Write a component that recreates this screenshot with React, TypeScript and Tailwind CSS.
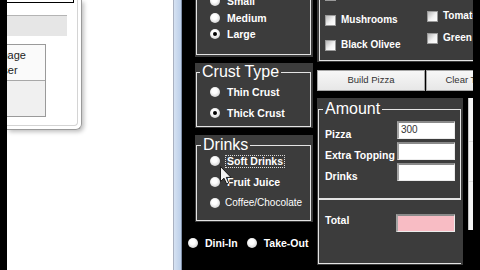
import React from "react";

function Radio({ checked }: { checked?: boolean }) {
  return (
    <span className="flex h-[10px] w-[10px] shrink-0 items-center justify-center rounded-full bg-[radial-gradient(circle_at_45%_40%,#ffffff_30%,#bdbdbd)]">
      {checked && <span className="h-[4px] w-[4px] rounded-full bg-black" />}
    </span>
  );
}

function Check() {
  return (
    <span className="h-[11px] w-[11px] shrink-0 border border-[#9a9a9a] bg-[linear-gradient(135deg,#b8b8b8,#f2f2f2_55%,#ffffff)]" />
  );
}

function RadioRow({
  label,
  checked,
  mt,
  className,
}: {
  label: string;
  checked?: boolean;
  mt: string;
  className?: string;
}) {
  return (
    <div className={`flex h-[14px] items-center ${mt}`}>
      <Radio checked={checked} />
      <span className={className ?? "ml-[7px] text-[10.5px] font-bold leading-[14px] text-white"}>{label}</span>
    </div>
  );
}

function CheckRow({ label, mt }: { label: string; mt: string }) {
  return (
    <div className={`flex h-[14px] items-center ${mt}`}>
      <Check />
      <span className="ml-[5px] whitespace-nowrap text-[10px] font-bold leading-[14px] text-white">{label}</span>
    </div>
  );
}

const box =
  "h-[18px] border-t-2 border-l-2 border-r border-b border-t-[#8a8a8a] border-l-[#a4a4a4] border-r-[#ececec] border-b-[#ececec]";

export default function App() {
  return (
    <div className="flex h-[270px] w-[480px] overflow-hidden bg-black [font-family:'Liberation_Sans',Arial,sans-serif]">
      {/* left black strip */}
      <div className="w-[7px] shrink-0 bg-black" />

      {/* white desktop area with clipped window */}
      <div className="w-[166px] shrink-0 bg-white">
        <div className="h-[130px] w-[75px] rounded-br-[6px] border-r border-b border-[#9a9a9a] shadow-[2px_2px_4px_rgba(0,0,0,0.25)]">
          <div className="mr-[3px] mb-[3px] h-[126px] rounded-br-[4px] border-r border-b border-[#d4d4d4]">
            <div className="h-[3px] w-[67px] border-r border-b border-black" />
            <div className="mt-[12px] h-[21px] w-[60px] border-t border-[#b4b4b4] bg-[#e6e6e6]" />
            <div className="mt-[8px] w-[39px] overflow-hidden">
              <div className="ml-[-41px] h-[73px] w-[80px] border border-[#9a9a9a]">
                <div className="h-[36px] border-b border-[#a8a8a8] bg-[#fafafa] pt-[3px] text-center text-[11px] leading-[15px] text-[#222]">
                  Manage
                  <br />
                  User
                </div>
                <div className="h-[35px] bg-[#f0f0f0]" />
              </div>
            </div>
          </div>
        </div>
      </div>

      {/* blue window frame strip */}
      <div className="w-[9px] shrink-0 border-l border-r border-l-[#aab2c2] border-r-[#7f8ea6] bg-[linear-gradient(90deg,#d6e2f2,#bccfe9)]" />

      {/* application */}
      <div className="flex w-[298px] shrink-0 bg-black pl-[6px]">
        {/* left column */}
        <div className="flex w-[125px] shrink-0 flex-col">
          {/* Size */}
          <div className="ml-[7px] mt-[-20px] h-[77px] w-[118px] bg-[#3c3c3c] pl-[1px] pr-[2px] pt-[1px]">
            <fieldset className="h-[74px] border border-[#e4e4e4]">
              <div className="flex flex-col pl-[13px] pt-[12px]">
                <RadioRow label="Small" mt="mt-0" />
                <RadioRow label="Medium" mt="mt-[3px]" />
                <RadioRow label="Large" checked mt="mt-[2px]" />
              </div>
            </fieldset>
          </div>

          {/* Crust Type */}
          <div className="ml-[7px] mt-[6px] h-[65px] w-[118px] bg-[#3c3c3c] pl-[1px] pr-[2px] pt-[1px]">
            <fieldset className="h-[63px] border border-[#e4e4e4]">
              <legend className="ml-[3px] px-[2px] text-[16px] leading-[16px] text-white">Crust Type</legend>
              <div className="flex flex-col pl-[13px]">
                <RadioRow label="Thin Crust" mt="mt-[5px]" />
                <RadioRow label="Thick Crust" checked mt="mt-[7px]" />
              </div>
            </fieldset>
          </div>

          {/* Drinks */}
          <div className="relative ml-[7px] mt-[7px] h-[87px] w-[118px] bg-[#3c3c3c] pl-[1px] pr-[2px] pt-[2px]">
            <fieldset className="h-[84px] border border-[#e4e4e4]">
              <legend className="ml-[4px] px-[2px] text-[16px] leading-[16px] text-white">Drinks</legend>
              <div className="flex flex-col pl-[13px]">
                <div className="mt-[1px] flex h-[14px] items-center">
                  <Radio />
                  <span className="ml-[5px] border border-dotted border-[#d8d8d8] px-[1px] text-[10.5px] font-bold leading-[11px] text-white">
                    Soft Drinks
                  </span>
                </div>
                <RadioRow label="Fruit Juice" mt="mt-[7px]" />
                <RadioRow
                  label="Coffee/Chocolate"
                  mt="mt-[7px]"
                  className="ml-[5px] text-[10px] leading-[14px] text-white"
                />
              </div>
            </fieldset>
            <svg
              className="absolute left-[25px] top-[31px]"
              width="12"
              height="19"
              viewBox="0 0 12 19"
            >
              <path
                d="M0.5 0.5 L0.5 15.5 L4 12.2 L6.6 18 L8.8 17 L6.3 11.4 L11 11.4 Z"
                fill="#f2f2f2"
                stroke="#1a1a1a"
                strokeWidth="1"
              />
            </svg>
          </div>

          {/* Dine-in / Take-out */}
          <div className="mt-[14px] flex h-[14px] items-center">
            <Radio />
            <span className="ml-[7px] text-[10.5px] font-bold leading-[14px] text-white">Dini-In</span>
            <span className="ml-[9px]">
              <Radio />
            </span>
            <span className="ml-[7px] text-[10.5px] font-bold leading-[14px] text-white">Take-Out</span>
          </div>
        </div>

        {/* right column */}
        <div className="ml-[4px] flex w-[156px] shrink-0 flex-col overflow-hidden">
          {/* Toppings */}
          <div className="mt-[-30px] h-[92px] w-[156px] shrink-0 overflow-hidden bg-[#3c3c3c] pl-[2px] pt-[1px]">
            <fieldset className="h-[90px] w-[170px] border border-r-0 border-[#e4e4e4]">
              <div className="flex">
                <div className="flex w-[107px] shrink-0 flex-col pl-[5px] pt-[16px]">
                  <CheckRow label="Extra Cheese" mt="mt-0" />
                  <CheckRow label="Mushrooms" mt="mt-[11px]" />
                  <CheckRow label="Black Olivee" mt="mt-[11px]" />
                </div>
                <div className="flex shrink-0 flex-col pt-[15px]">
                  <CheckRow label="Onions" mt="mt-0" />
                  <CheckRow label="Tomatoes" mt="mt-[8px]" />
                  <CheckRow label="Green Peppers" mt="mt-[8px]" />
                </div>
              </div>
            </fieldset>
          </div>

          {/* buttons */}
          <div className="mt-[8px] flex h-[21px] shrink-0">
            <div className="flex h-[21px] w-[108px] shrink-0 items-center justify-center border border-[#a6a6a6] bg-[linear-gradient(#f7f7f7,#e7e7e7)] text-[9.5px] text-[#333]">
              Build Pizza
            </div>
            <div className="ml-[1px] flex h-[21px] w-[84px] shrink-0 items-center justify-center border border-[#a6a6a6] bg-[linear-gradient(#f7f7f7,#e7e7e7)] text-[9.5px] text-[#333]">
              Clear Total
            </div>
          </div>

          {/* Amount + side list */}
          <div className="mt-[7px] flex shrink-0">
            <div className="h-[167px] w-[146px] shrink-0 bg-[#3c3c3c] pl-[1px] pr-[2px] pt-[3px]">
              <fieldset className="h-[98px] border border-[#e4e4e4]">
                <legend className="ml-[4px] px-[2px] text-[16px] leading-[16px] text-white">Amount</legend>
                <div className="flex flex-col pl-[6px]">
                  <div className="mt-[4px] flex items-end">
                    <span className="mb-[-2px] w-[72px] whitespace-nowrap text-[10.5px] font-bold leading-[14px] text-white">Pizza</span>
                    <div className={`${box} w-[58px] bg-white pl-[2px] text-[10px] leading-[14px] text-[#333]`}>300</div>
                  </div>
                  <div className="mt-[3px] flex items-end">
                    <span className="mb-[-2px] w-[72px] whitespace-nowrap text-[10.5px] font-bold leading-[14px] text-white">Extra Topping</span>
                    <div className={`${box} w-[58px] bg-white`} />
                  </div>
                  <div className="mt-[3px] flex items-end">
                    <span className="mb-[-2px] w-[72px] whitespace-nowrap text-[10.5px] font-bold leading-[14px] text-white">Drinks</span>
                    <div className={`${box} w-[58px] bg-white`} />
                  </div>
                </div>
              </fieldset>
              <fieldset className="h-[65px] border border-r-0 border-[#e4e4e4]">
                <div className="mt-[14px] flex items-start pl-[6px]">
                  <span className="mt-[-1px] w-[71px] text-[10.5px] font-bold leading-[14px] text-white">Total</span>
                  <div className={`${box} w-[59px] bg-[#f8bcc4]`} />
                </div>
              </fieldset>
            </div>
            <div className="ml-[5px] flex h-[132px] w-[20px] shrink-0 flex-col border-l border-[#c4c4c4] bg-[#f3f3f3]">
              <div className="h-[44px] border-b border-[#dcdcdc]" />
              <div className="h-[40px] border-b border-[#dcdcdc]" />
            </div>
          </div>
        </div>
      </div>
    </div>
  );
}
